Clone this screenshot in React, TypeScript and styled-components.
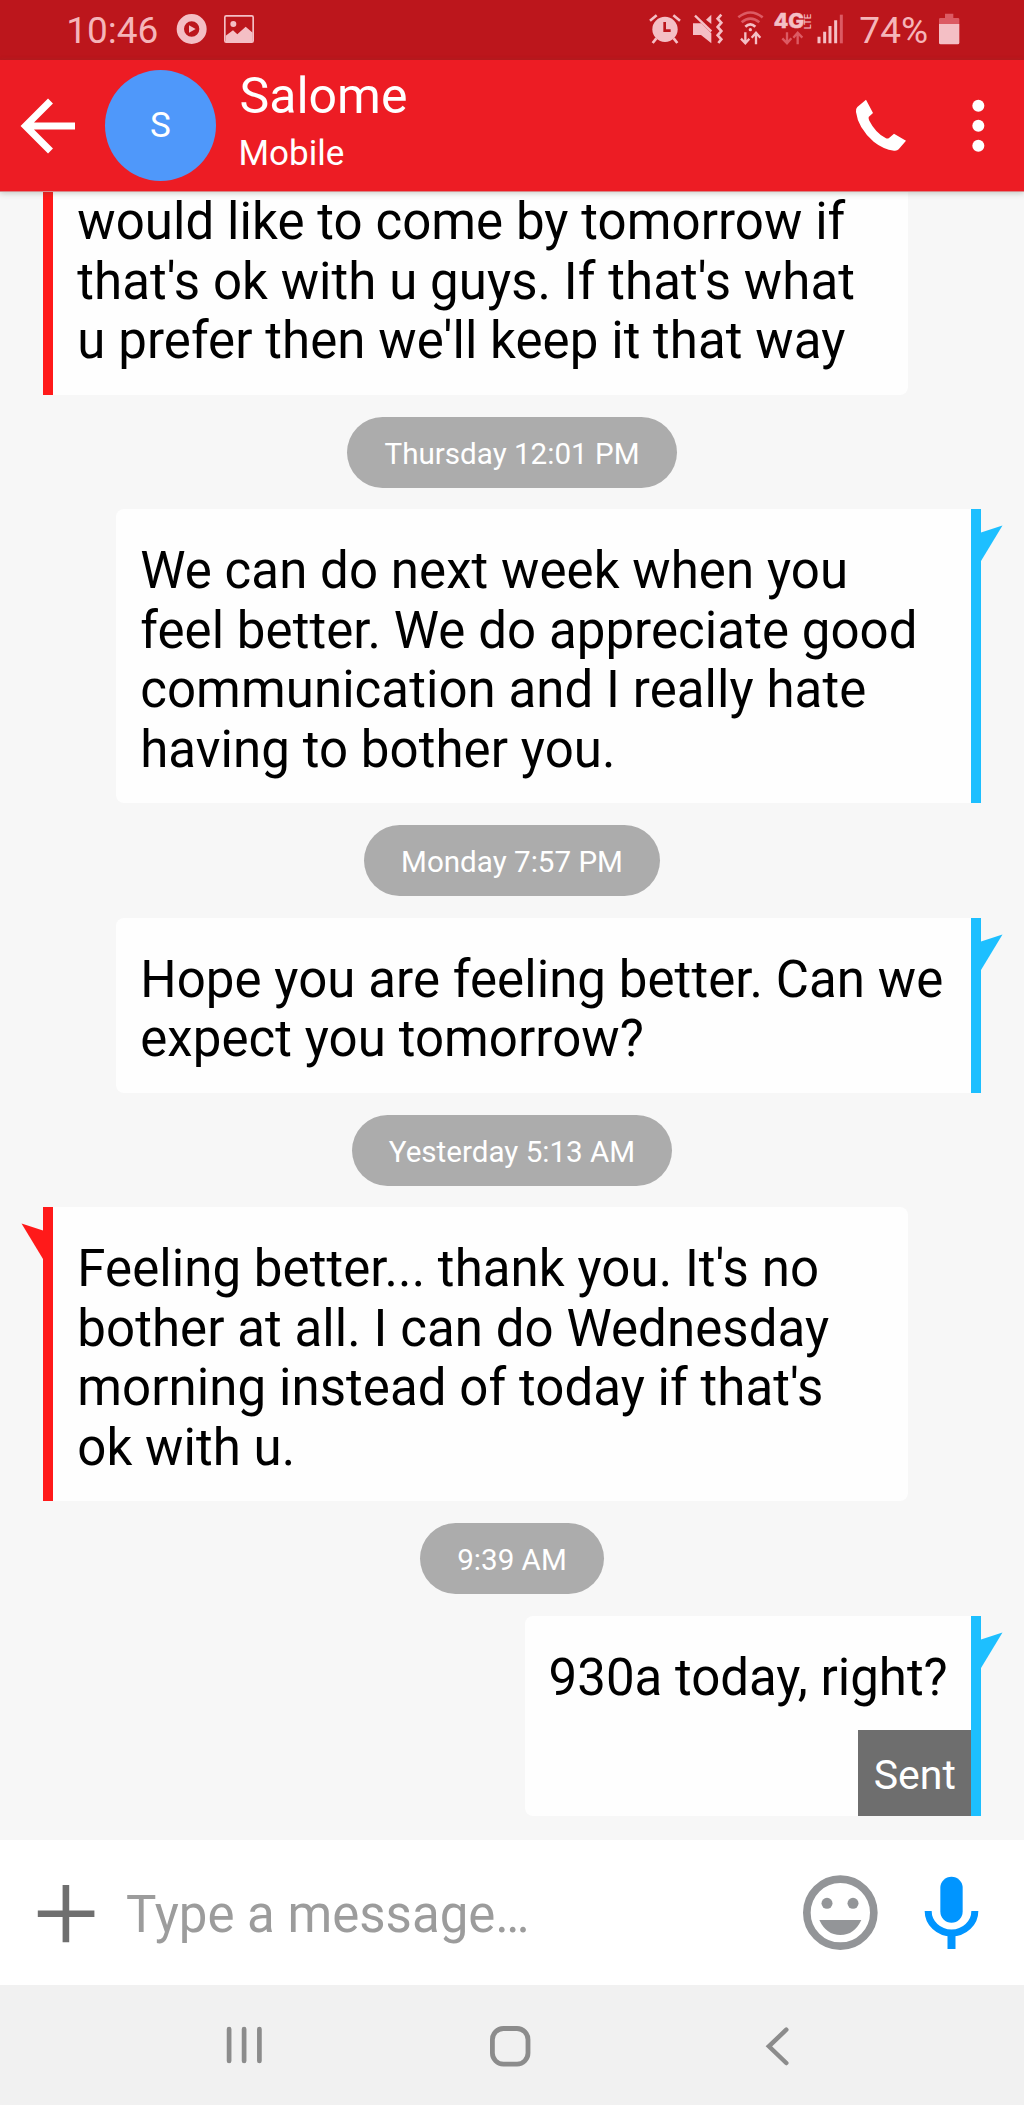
import React from "react";
import styled, { createGlobalStyle } from "styled-components";

const GlobalStyle = createGlobalStyle`
  *, *::before, *::after { box-sizing: border-box; }
  body { margin: 0; font-family: Roboto, "Noto Sans", sans-serif; }
`;

const tint = "#f4bfc5";
const faint = "#dc5a63";
const statusRed = "#bc161c";
const red = "#ff1a1a";
const blue = "#1dbfff";

const Screen = styled.div`
  display: flex;
  flex-direction: column;
  width: 1024px;
  height: 2105px;
  overflow: hidden;
  background: #f7f7f7;
`;

const StatusBar = styled.div`
  display: flex;
  align-items: center;
  justify-content: space-between;
  height: 60px;
  padding: 0 44px 0 65px;
  background: ${statusRed};
`;

const StatusGroup = styled.div`
  display: flex;
  align-items: center;
`;

const StatusText = styled.span<{ $width: number; $indent?: number }>`
  width: ${(p) => p.$width}px;
  padding-left: ${(p) => p.$indent ?? 0}px;
  padding-top: 1px;
  font-size: 37px;
  line-height: 44px;
  color: #f5b5b9;
  white-space: nowrap;
`;

const Glyph = styled.svg<{ $w: number; $h: number }>`
  display: block;
  flex: none;
  width: ${(p) => p.$w}px;
  height: ${(p) => p.$h}px;
`;

const Header = styled.header`
  display: flex;
  align-items: center;
  height: 131px;
  background: #ed1c24;
  box-shadow: 0 1px 0 #d8888a, 0 2px 6px rgba(60, 80, 60, 0.3);
  z-index: 1;
`;

const Avatar = styled.div`
  display: flex;
  align-items: center;
  justify-content: center;
  width: 111px;
  height: 111px;
  margin-right: 22.5px;
  border-radius: 50%;
  background: #4f98fa;
  color: #fff;
  font-size: 35px;
`;

const Contact = styled.div`
  flex: 1;
  padding-bottom: 12px;
  color: #fff;
`;

const ContactName = styled.div`
  font-size: 50px;
  line-height: 60px;
  padding-left: 1px;
`;

const ContactKind = styled.div`
  font-size: 35px;
  line-height: 41px;
  margin-top: 7px;
`;

const Thread = styled.main`
  flex: 1;
  display: flex;
  flex-direction: column;
  justify-content: flex-end;
  gap: 21.9px;
  min-height: 0;
  padding: 0 43.3px 24px;
`;

const DatePill = styled.div`
  align-self: center;
  height: 71px;
  padding: 0 37px;
  border-radius: 36px;
  background: #acacac;
  color: #fff;
  font-size: 29.6px;
  line-height: 74px;
  white-space: nowrap;
`;

const Bubble = styled.article<{ $mine: boolean; $wide: boolean; $cut: boolean }>`
  position: relative;
  display: flex;
  flex-direction: column;
  align-self: ${(p) => (p.$mine ? "flex-end" : "flex-start")};
  width: ${(p) => (p.$wide ? "864.5px" : "auto")};
  letter-spacing: ${(p) => (p.$wide ? "0.07px" : "normal")};
  background: #fefefe;
  border-style: solid;
  border-color: ${(p) => (p.$mine ? blue : red)};
  border-width: ${(p) => (p.$mine ? "0 10px 0 0" : "0 0 0 10px")};
  border-radius: ${(p) => (p.$mine ? "8px 0 0 8px" : p.$cut ? "0 0 8px 0" : "0 8px 8px 0")};
`;

const BubbleText = styled.p<{ $cut: boolean; $sent: boolean }>`
  margin: 0;
  padding: ${(p) => (p.$cut ? 0 : 31.5)}px ${(p) => (p.$sent ? 23 : 24)}px ${(p) => (p.$sent ? 22.5 : 23.5)}px 24px;
  font-size: 51px;
  line-height: 59.75px;
  color: #000;
  white-space: pre;
`;

const Tail = styled.svg<{ $mine: boolean }>`
  position: absolute;
  top: 16px;
  ${(p) => (p.$mine ? "right: -32px;" : "left: -32px; transform: scaleX(-1);")}
  width: 22px;
  height: 37px;
`;

const SentTag = styled.div`
  align-self: flex-end;
  width: 113px;
  height: 86px;
  padding-left: 16px;
  background: #6e6e6e;
  color: #fff;
  font-size: 41px;
  line-height: 90px;
`;

const Composer = styled.div`
  display: flex;
  align-items: center;
  height: 145px;
  background: #fff;
`;

const Placeholder = styled.span`
  flex: 1;
  padding: 4px 0 0;
  font-size: 51px;
  line-height: 60px;
  color: #9c9c9c;
`;

const NavBar = styled.nav`
  display: flex;
  align-items: center;
  height: 120px;
  padding-left: 213.5px;
  gap: 206.5px;
  background: #f1f1f1;
`;

type Entry =
  | { kind: "date"; label: string }
  | { kind: "message"; mine: boolean; lines: string[]; wide?: boolean; cut?: boolean; sent?: boolean };

const entries: Entry[] = [
  {
    kind: "message",
    mine: false,
    wide: true,
    cut: true,
    lines: ["would like to come by tomorrow if", "that's ok with u guys. If that's what", "u prefer then we'll keep it that way"],
  },
  { kind: "date", label: "Thursday 12:01 PM" },
  {
    kind: "message",
    mine: true,
    wide: true,
    lines: ["We can do next week when you", "feel better. We do appreciate good", "communication and I really hate", "having to bother you."],
  },
  { kind: "date", label: "Monday 7:57 PM" },
  { kind: "message", mine: true, wide: true, lines: ["Hope you are feeling better. Can we", "expect you tomorrow?"] },
  { kind: "date", label: "Yesterday 5:13 AM" },
  {
    kind: "message",
    mine: false,
    wide: true,
    lines: ["Feeling better... thank you. It's no", "bother at all. I can do Wednesday", "morning instead of today if that's", "ok with u."],
  },
  { kind: "date", label: "9:39 AM" },
  { kind: "message", mine: true, sent: true, lines: ["930a today, right?"] },
];

const MediaIcons = () => (
  <Glyph $w={100} $h={60} viewBox="510 0 300 180">
    <circle cx="575" cy="87" r="34" fill="none" stroke={tint} strokeWidth="22" />
    <path d="M567 76 L587 87 L567 98 Z" fill={tint} />
    <rect x="674.500" y="47.500" width="85" height="79" rx="4" fill="none" stroke={tint} strokeWidth="5" />
    <circle cx="700" cy="72" r="9" fill={tint} />
    <path d="M677 107 L699 91 L712 103 L737 80 L758 98 V126 H677 Z" fill={tint} />
  </Glyph>
);

const AlarmIcon = () => (
  <Glyph $w={40} $h={60} viewBox="20 0 120 180">
    <circle cx="74" cy="88" r="38" fill={tint} />
    <path d="M29 62 L49 46 M119 62 L99 46" stroke={tint} strokeWidth="8" />
    <path d="M48 115 L37 129 M100 115 L111 129" stroke={tint} strokeWidth="8" />
    <path d="M73 66 V92 H91" fill="none" stroke={statusRed} strokeWidth="8" />
  </Glyph>
);

const MuteIcon = () => (
  <Glyph $w={43.33} $h={60} viewBox="140 0 130 180">
    <path d="M158 70 H183 L213 100 V130 L182 105 H158 Z" fill={tint} />
    <path d="M213 44 V72 L197 59 Z" fill={tint} />
    <path d="M164 47 L213 94" stroke={tint} strokeWidth="7" />
    <path d="M243 44 L232 56 L243 68 L232 81 L243 93 L232 106 L243 118 L234 129" fill="none" stroke={tint} strokeWidth="8" />
  </Glyph>
);

const WifiIcon = () => (
  <Glyph $w={40} $h={60} viewBox="270 0 120 180">
    <path d="M295 52 Q331 23 368 52" fill="none" stroke={faint} strokeWidth="8" />
    <path d="M305 67 Q331 45 358 67" fill="none" stroke={faint} strokeWidth="8" />
    <path d="M316 80 Q331 66 346 80" fill="none" stroke={tint} strokeWidth="8" />
    <circle cx="331" cy="89" r="5" fill={tint} />
    <path d="M316 97 V128 M303 116 L316 130 L328 116" fill="none" stroke={tint} strokeWidth="7" />
    <path d="M348 133 V100 M335 113 L348 98 L361 113" fill="none" stroke={tint} strokeWidth="7" />
  </Glyph>
);

const NetworkIcon = () => (
  <Glyph $w={45} $h={60} viewBox="390 0 135 180">
    <text x="401" y="85" fontFamily="Inter, sans-serif" fontWeight="800" fontSize="59" textLength="91" lengthAdjust="spacingAndGlyphs" fill={tint} stroke={tint} strokeWidth="1.500">
      4G
    </text>
    <text transform="translate(512 88) rotate(-90)" fontFamily="Inter, sans-serif" fontWeight="600" fontSize="25" textLength="47" lengthAdjust="spacingAndGlyphs" fill={tint}>
      LTE
    </text>
    <path d="M441 97 V128 M427 115 L441 130 L454 115" fill="none" stroke={faint} strokeWidth="7" />
    <path d="M473 133 V100 M460 113 L473 98 L487 113" fill="none" stroke={faint} strokeWidth="7" />
  </Glyph>
);

const SignalIcon = () => (
  <Glyph $w={41.67} $h={60} viewBox="525 0 125 180">
    <path d="M537 110 V130 M554 95 V130 M570 78 V130 M587 61 V130" stroke={tint} strokeWidth="9" />
    <path d="M604 44 V130" stroke={faint} strokeWidth="9" />
  </Glyph>
);

const BatteryIcon = () => (
  <Glyph $w={43.33} $h={60} viewBox="890 0 130 180">
    <path d="M914 41 H939 V54 H953 Q957 54 957 58 V72 H896 V58 Q896 54 900 54 H914 Z" fill={faint} />
    <path d="M896 72 H957 V128 Q957 133 952 133 H901 Q896 133 896 128 Z" fill={tint} />
  </Glyph>
);

const BackArrow = () => (
  <Glyph $w={105} $h={131} viewBox="0 60 105 131">
    <path d="M50.500 101 L25.500 126 L50.500 151 M27 126 H75" fill="none" stroke="#fff" strokeWidth="7" />
  </Glyph>
);

const HeaderActions = () => (
  <Glyph $w={184} $h={131} viewBox="720 180 552 393">
    <path
      d="M798 299 L819 339 L806 351 Q805 356 808 362 Q826 398 858 415 Q863 417 868 413 L882 401 L918 422 L896 448 Q892 453 882 452 Q850 448 821 425 Q774 384 768 336 Q767 325 772 321 Z"
      fill="#fff"
    />
    {[317, 377, 437].map((y) => (
      <circle key={y} cx="1135" cy={y} r="18" fill="#fff" />
    ))}
  </Glyph>
);

const PlusIcon = () => (
  <Glyph $w={126} $h={145} viewBox="0 0 126 145">
    <path d="M37.800 73.700 H94.400 M65.900 45 V102.300" stroke="#6f6f6f" strokeWidth="6.600" />
  </Glyph>
);

const SmileIcon = () => (
  <Glyph $w={97} $h={145} viewBox="880 60 291 435">
    <circle cx="1019" cy="278" r="100.500" fill="none" stroke="#939598" strokeWidth="23" />
    <circle cx="979" cy="250" r="16.500" fill="#939598" />
    <circle cx="1057" cy="250" r="16.500" fill="#939598" />
    <path d="M956 300 H1082 Q1061 345 1019 345 Q977 345 956 300 Z" fill="#939598" />
  </Glyph>
);

const MicIcon = () => (
  <Glyph $w={133} $h={145} viewBox="1171 60 399 435">
    <rect x="1319" y="170" width="67" height="138" rx="33.500" fill="#0095ff" />
    <path d="M1282.500 273 A70 66 0 0 0 1422.500 273" fill="none" stroke="#0095ff" strokeWidth="21" />
    <path d="M1352.500 342 V387" stroke="#0095ff" strokeWidth="24" />
  </Glyph>
);

const navStroke = { fill: "none", stroke: "#8c8c8c", strokeLinecap: "round" as const };

export default function App() {
  return (
    <>
      <GlobalStyle />
      <Screen>
        <StatusBar>
          <StatusGroup>
            <StatusText $width={105} $indent={1.2}>10:46</StatusText>
            <MediaIcons />
          </StatusGroup>
          <StatusGroup>
            <AlarmIcon />
            <MuteIcon />
            <WifiIcon />
            <NetworkIcon />
            <SignalIcon />
            <StatusText $width={80} $indent={2.7}>74%</StatusText>
            <BatteryIcon />
          </StatusGroup>
        </StatusBar>
        <Header>
          <BackArrow />
          <Avatar>S</Avatar>
          <Contact>
            <ContactName>Salome</ContactName>
            <ContactKind>Mobile</ContactKind>
          </Contact>
          <HeaderActions />
        </Header>
        <Thread>
          {entries.map((e, i) =>
            e.kind === "date" ? (
              <DatePill key={i}>{e.label}</DatePill>
            ) : (
              <Bubble key={i} $mine={e.mine} $wide={!!e.wide} $cut={!!e.cut}>
                <BubbleText $cut={!!e.cut} $sent={!!e.sent}>{e.lines.join("\n")}</BubbleText>
                {e.sent && <SentTag>Sent</SentTag>}
                {!e.cut && (
                  <Tail $mine={e.mine} viewBox="0 0 22 37">
                    <path d="M0 7.500 L21.500 0.500 L0 36 Z" fill={e.mine ? blue : red} />
                  </Tail>
                )}
              </Bubble>
            )
          )}
        </Thread>
        <Composer>
          <PlusIcon />
          <Placeholder>Type a message…</Placeholder>
          <SmileIcon />
          <MicIcon />
        </Composer>
        <NavBar>
          <Glyph $w={60} $h={60} viewBox="0 0 60 60">
            <path d="M15.100 14 V46 M30.100 14 V46 M45.400 14 V46" {...navStroke} strokeWidth="4.700" />
          </Glyph>
          <Glyph $w={60} $h={60} viewBox="0 0 60 60">
            <rect x="12.400" y="13.500" width="35.600" height="35.600" rx="11" {...navStroke} strokeWidth="4.800" />
          </Glyph>
          <Glyph $w={60} $h={60} viewBox="0 0 60 60">
            <path d="M39.300 14.700 L21.900 31.300 L39.300 48" {...navStroke} strokeWidth="4.500" />
          </Glyph>
        </NavBar>
      </Screen>
    </>
  );
}
